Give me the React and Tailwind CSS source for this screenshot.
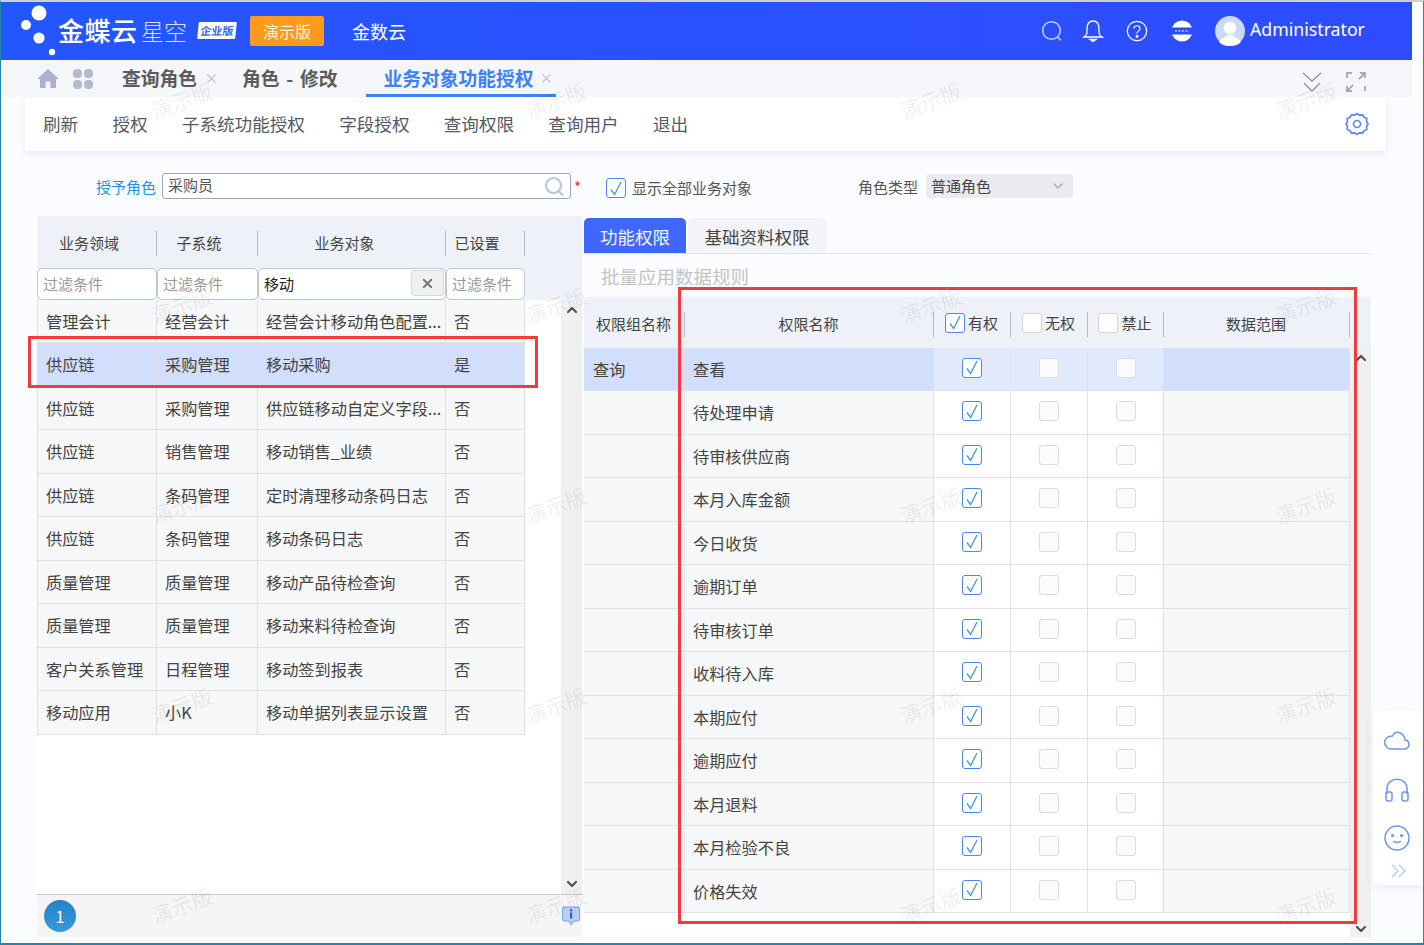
import React from "react";
import { ChevronUp, ChevronDown, X } from "lucide-react";

const FONT = '"Noto Sans CJK SC","Noto Sans",sans-serif';

const leftRows = [
  ["管理会计", "经营会计", "经营会计移动角色配置...", "否"],
  ["供应链", "采购管理", "移动采购", "是"],
  ["供应链", "采购管理", "供应链移动自定义字段...", "否"],
  ["供应链", "销售管理", "移动销售_业绩", "否"],
  ["供应链", "条码管理", "定时清理移动条码日志", "否"],
  ["供应链", "条码管理", "移动条码日志", "否"],
  ["质量管理", "质量管理", "移动产品待检查询", "否"],
  ["质量管理", "质量管理", "移动来料待检查询", "否"],
  ["客户关系管理", "日程管理", "移动签到报表", "否"],
  ["移动应用", "小K", "移动单据列表显示设置", "否"],
];
const rightRows = ["查看", "待处理申请", "待审核供应商", "本月入库金额", "今日收货", "逾期订单", "待审核订单", "收料待入库", "本期应付", "逾期应付", "本月退料", "本月检验不良", "价格失效"];
const toolbar = ["刷新", "授权", "子系统功能授权", "字段授权", "查询权限", "查询用户", "退出"];
const marks = [];
[100, 305, 505, 705, 905].forEach((y) => [183, 557, 932, 1307].forEach((x) => marks.push([x, y])));

function Box({ checked, size = "w-[20px] h-[20px]", light }) {
  return (
    <span className={`${size} inline-flex items-center justify-center rounded-[3px] border ${checked ? "border-[#4c86f0]" : light ? "border-[#dcdcdc]" : "border-[#d4d4d4]"} ${light && !checked ? "bg-[#fbfbfd]" : "bg-white"}`}>
      {checked && (
        <svg width="16" height="17" viewBox="0 0 16 17" fill="none">
          <path d="M3 9.5 L6.6 14.5 L13 2" stroke="#3f97e6" strokeWidth="1.3" />
        </svg>
      )}
    </span>
  );
}

function Sep() {
  return <span className="absolute right-0 top-[15px] h-[25px] w-px bg-[#b4b8c0]" />;
}

function Logo() {
  return (
    <div className="relative h-[58px] w-[248px] shrink-0">
      <svg className="absolute left-0 top-0" width="60" height="58" viewBox="0 0 60 58" fill="white">
        <circle cx="38" cy="11" r="7.5" />
        <circle cx="25" cy="23" r="5" />
        <circle cx="38" cy="36" r="5.6" />
        <circle cx="51" cy="50" r="3.2" />
      </svg>
      <span className="absolute left-[57px] top-[9px] text-[26px] leading-[38px] font-medium text-white tracking-[0.5px]">金蝶云</span>
      <span className="absolute left-[140px] top-[10px] text-[23px] leading-[36px] font-light text-[#d5e0ff]">星空</span>
      <span className="absolute left-[197px] top-[20px] h-[17px] w-[38px] -skew-x-6 bg-white rounded-[1px] text-[11px] leading-[17px] font-bold text-[#3f66e6] text-center">企业版</span>
    </div>
  );
}

export default function App() {
  return (
    <div className="relative w-[1424px] h-[945px] overflow-hidden bg-[#fbfcff] border-t-2 border-t-[#cfcfcf] border-l border-l-[#2484ad] border-r border-r-[#3f7e9e] border-b-2 border-b-[#2484ad] text-[#333]" style={{ fontFamily: FONT }}>
      {/* header */}
      <div className="w-[1411px] h-[58px] flex items-center bg-gradient-to-r from-[#2456ff] to-[#2e4cff] text-white">
        <Logo />
        <div className="ml-[1px] w-[74px] h-[30px] rounded-[2px] bg-[#ff9a1c] text-[16px] leading-[30px] text-center text-[#fff3dd]">演示版</div>
        <div className="ml-[28px] text-[18px] text-white">金数云</div>
        <div className="ml-auto flex items-center">
          <svg width="22" height="22" viewBox="0 0 22 22" fill="none" stroke="#c4d1ff" strokeWidth="1.5"><circle cx="10.5" cy="10.5" r="8.8" /><path d="M16.5 17 L20 20.5" /></svg>
          <svg className="ml-[19px]" width="22" height="24" viewBox="0 0 22 24" fill="none" stroke="white" strokeWidth="1.3"><path d="M11 2 C6.5 2 5 6 5 10 V14 C5 16 3.5 17 2 18 H20 C18.5 17 17 16 17 14 V10 C17 6 15.5 2 11 2Z" /><path d="M8 20.5 H14 L11 22.5Z" fill="white" /></svg>
          <svg className="ml-[22px]" width="22" height="22" viewBox="0 0 22 22" fill="none" stroke="white" strokeWidth="1.2"><circle cx="11" cy="11" r="9.7" /><path d="M8 8.5 C8 4.8 14 4.8 14 8.5 C14 11 11 10.8 11 13.5" /><circle cx="11" cy="16.3" r="0.9" fill="white" /></svg>
          <svg className="ml-[23px]" width="22" height="22" viewBox="0 0 22 22"><circle cx="11" cy="11" r="10.5" fill="white" /><rect x="0" y="7.5" width="22" height="7" fill="#2e4cff" /><path d="M4 11 H18" stroke="#b9c6ff" strokeWidth="1.6" strokeDasharray="2 1.4" /></svg>
          <svg className="ml-[22px]" width="30" height="30" viewBox="0 0 30 30"><circle cx="15" cy="15" r="15" fill="#ccd9f7" /><circle cx="15" cy="12" r="6.2" fill="white" /><path d="M4 26 C7 21 11 22 12 19 H18 C19 22 23 21 26 26 C23 29 19 30 15 30 C11 30 7 29 4 26Z" fill="white" /></svg>
          <span className="ml-[5px] mr-[47px] -mt-[4px] w-[115px] whitespace-nowrap text-[17.7px] leading-[28px] text-white" style={{ fontFamily: '"Noto Sans",sans-serif' }}>Administrator</span>
        </div>
      </div>

      {/* tabs */}
      <div className="w-[1411px] h-[37px] flex items-center bg-[#f5f6fa] relative">
        <svg className="ml-[35px]" width="24" height="21" viewBox="0 0 24 21" fill="#a9b2c8"><path d="M12 1 L23 11 H20 V20 H14.5 V13.5 H9.5 V20 H4 V11 H1Z" /></svg>
        <svg className="ml-[13px]" width="20" height="20" viewBox="0 0 20 20" fill="#b3bacd"><rect x="0" y="0" width="9" height="9" rx="4" /><rect x="11" y="0" width="9" height="9" rx="4" /><rect x="0" y="11" width="9" height="9" rx="4" /><rect x="11" y="11" width="9" height="9" rx="4" /></svg>
        <span className="ml-[29px] text-[18.75px] font-bold text-[#5c5c5c] whitespace-nowrap">查询角色</span>
        <X className="ml-[7px] shrink-0 text-[#bfc3cc]" size={15} strokeWidth={1.8} />
        <span className="ml-[23px] text-[18.75px] font-bold text-[#5c5c5c] whitespace-nowrap [word-spacing:2.5px]">角色 - 修改</span>
        <div className="ml-[29px] h-full w-[190px] flex items-center border-b-[3px] border-b-[#3d80f7] pl-[17px] pt-[2px]">
          <span className="text-[18.75px] font-bold text-[#3d80f7] whitespace-nowrap">业务对象功能授权</span>
          <X className="ml-[6px] shrink-0 text-[#bfc3cc]" size={15} strokeWidth={1.8} />
        </div>
        <svg className="ml-auto mt-[6px]" width="20" height="22" viewBox="0 0 20 22" fill="none" stroke="#8e94a8" strokeWidth="1.4"><path d="M1 2 L10 10 L19 2" /><path d="M2 12 L10 20 L18 12" /></svg>
        <svg className="ml-[24px] mr-[46px] mt-[6px]" width="20" height="20" viewBox="0 0 20 20" fill="none" stroke="#8e94a8" strokeWidth="1.4"><path d="M1 6 V1 H6" /><path d="M14 1 H19 V6" /><path d="M19 14 V19" /><path d="M1 19 L7 13" /><path d="M13 7 L18 2" /><path d="M1 14 V19 H6" /></svg>
      </div>

      {/* toolbar */}
      <div className="ml-[24px] w-[1361px] h-[54px] flex items-center bg-white shadow-[0_3px_6px_rgba(190,200,225,0.3)] text-[17.6px] text-[#555b66] pl-[18px]">
        <div className="flex gap-[34.2px]">
          {toolbar.map((t) => <span key={t}>{t}</span>)}
        </div>
        <svg className="ml-auto mr-[17px]" width="24" height="24" viewBox="0 0 24 24" fill="none" stroke="#5f86f5" strokeWidth="1.7"><path d="M12 1.5 L14.5 3.2 L17.5 2.8 L19 5.3 L21.8 6.5 L21.5 9.5 L23 12 L21.5 14.5 L21.8 17.5 L19 18.7 L17.5 21.2 L14.5 20.8 L12 22.5 L9.5 20.8 L6.5 21.2 L5 18.7 L2.2 17.5 L2.5 14.5 L1 12 L2.5 9.5 L2.2 6.5 L5 5.3 L6.5 2.8 L9.5 3.2Z" strokeLinejoin="round" /><circle cx="12" cy="12" r="3.5" /></svg>
      </div>

      {/* form */}
      <div className="mt-[22px] h-[26px] flex items-center text-[15px]">
        <span className="ml-[95px] text-[#1c92ea] w-[60px] pt-[3px] whitespace-nowrap">授予角色</span>
        <div className="ml-[6px] w-[409px] h-[26px] border border-[#9ca6b6] rounded-[3px] bg-white flex items-center pl-[5px] pr-[5px] text-[#555]">
          <span className="-mt-[2px]">采购员</span>
          <svg className="ml-auto" width="21" height="21" viewBox="0 0 21 21" fill="none" stroke="#b5c6e4" strokeWidth="2.2"><circle cx="9.5" cy="9.5" r="7.5" /><path d="M15 15.5 L19 19.5" /></svg>
        </div>
        <span className="ml-[3px] mt-[2px] text-[#f03030]">*</span>
        <span className="ml-[25px] mt-[4px] flex items-center">
          <Box checked />
          <span className="ml-[6px] text-[#555]">显示全部业务对象</span>
        </span>
        <span className="ml-[106px] mt-[3px] text-[#555] whitespace-nowrap">角色类型</span>
        <div className="ml-[8px] w-[147px] h-[24px] rounded-[4px] bg-[#e9ebef] flex items-center pl-[5px] pr-[7px] text-[#444]">
          <span>普通角色</span>
          <ChevronDown className="ml-auto text-[#aaaeb6]" size={16} strokeWidth={2.4} />
        </div>
      </div>

      {/* main */}
      <div className="mt-[17px] flex items-start">
        {/* left panel */}
        <div className="ml-[36px] w-[545px] h-[721px] flex flex-col">
          <div className="h-[84px] bg-[#eef1f8]">
            <div className="grid grid-cols-[120px_101px_188px_79px] w-[488px] h-[52px] text-[15px] text-[#444] text-center leading-[53px] relative">
              <div className="relative pr-[16px]">业务领域<Sep /></div>
              <div className="relative pr-[17px]">子系统<Sep /></div>
              <div className="relative pr-[15px]">业务对象<Sep /></div>
              <div className="relative pr-[17px]">已设置<Sep /></div>
            </div>
            <div className="grid grid-cols-[120px_101px_188px_79px] w-[488px] h-[32px] text-[15px]">
              {["", "", "移动", ""].map((v, i) => (
                <div key={i} className="relative h-[32px] rounded-[5px] border border-[#b9cbd8] bg-white pl-[5px] leading-[30px] overflow-hidden">
                  {v ? <span className="text-[#222]">{v}</span> : <span className="text-[#9a9a9a]">过滤条件</span>}
                  {v && (
                    <span className="absolute right-[1px] top-[1px] w-[33px] h-[26px] rounded-[3px] border border-[#d6d6d6] bg-[#f0f0f0] flex items-center justify-center">
                      <X size={15} strokeWidth={3} className="text-[#777]" />
                    </span>
                  )}
                </div>
              ))}
            </div>
          </div>
          <div className="h-[594px] flex bg-white">
            <div className="w-[488px] text-[16.2px]">
              {leftRows.map((r, i) => (
                <div key={i} className={`grid grid-cols-[119px_101px_188px_78px] ${i % 2 ? "h-[44px]" : "h-[43px]"} leading-[42px] border-b border-l border-r border-[#dfe1e5] ${i === 1 ? "bg-[#d2dffc]" : "bg-[#f6f7f9]"} text-[#444]`}>
                  {r.map((c, j) => (
                    <div key={j} className={`whitespace-nowrap overflow-hidden pl-[8px] ${j < 3 ? "border-r border-r-[#dfe1e5]" : ""}`}>{c}</div>
                  ))}
                </div>
              ))}
            </div>
            <div className="ml-[36px] w-[21px] bg-[#f0f0f0] flex flex-col items-center justify-between">
              <ChevronUp size={16} strokeWidth={3.2} className="mt-[2px] text-[#505050]" />
              <ChevronDown size={16} strokeWidth={3.2} className="mb-[2px] text-[#505050]" />
            </div>
          </div>
          <div className="h-[43px] bg-[#f5f5f5] border-t border-t-[#c9c9c9] flex items-center relative">
            <span className="ml-[7px] w-[32px] h-[32px] rounded-full bg-gradient-to-b from-[#1f82cb] to-[#3a9ad6] text-white text-[16px] flex items-center justify-center">1</span>
            <svg className="ml-auto mr-[2px]" width="18" height="20" viewBox="0 0 18 20"><path d="M2 1 H16 Q17.5 1 17.5 3 V13 Q17.5 15 16 15 H12 L9 19 L7 15 H2 Q0.5 15 0.5 13 V3 Q0.5 1 2 1Z" fill="#b7cdf3" stroke="#7d9fdc" /><rect x="8" y="3.2" width="2.2" height="2.2" fill="#2a62c4" /><rect x="8" y="6.5" width="2.2" height="6" fill="#2a62c4" /></svg>
          </div>
        </div>

        {/* right panel */}
        <div className="ml-[2px] mt-[2px] w-[787px] flex flex-col">
          <div className="h-[36px] flex items-stretch border-b border-b-[#e3e5ea] text-[17.5px]">
            <div className="w-[102px] rounded-t-[5px] bg-[#3f66ff] text-[#f3f6ff] text-center leading-[38px]">功能权限</div>
            <div className="ml-[2px] w-[138px] rounded-t-[5px] bg-[#f2f4f9] text-[#444] text-center leading-[38px]">基础资料权限</div>
          </div>
          <div className="h-[43px] pl-[17px] text-[18.5px] leading-[44px] text-[#c4c4c4] whitespace-nowrap">批量应用数据规则</div>
          <div className="h-[51px] bg-[#eef1f8] text-[15px] text-[#444] leading-[54px] text-center">
            <div className="grid grid-cols-[101px_249px_77px_77px_76px_186px] w-[766px]">
              <div className="relative pr-[2px]">权限组名称<Sep /></div>
              <div className="relative pr-[2px]">权限名称<Sep /></div>
              <div className="relative flex items-center justify-center gap-[3px] h-[51px] pr-[2px]"><Box checked /><span>有权</span><Sep /></div>
              <div className="relative flex items-center justify-center gap-[3px] h-[51px] pr-[2px]"><Box /><span>无权</span><Sep /></div>
              <div className="relative flex items-center justify-center gap-[3px] h-[51px] pr-[2px]"><Box /><span>禁止</span><Sep /></div>
              <div className="relative pr-[2px]">数据范围<Sep /></div>
            </div>
          </div>
          <div className="h-[589px] flex bg-white">
            <div className="w-[766px] text-[16.2px] text-[#444]">
              {rightRows.map((n, i) => (
                <div key={n} className={`grid grid-cols-[101px_249px_77px_77px_76px_186px] ${i % 2 ? "h-[44px]" : "h-[43px]"} leading-[42px] border-b border-b-[#dfe1e5] ${i === 0 ? "bg-[#d2dffc]" : ""}`}>
                  <div className={`pl-[9px] border-r border-r-[#dfe1e5] ${i === 0 ? "" : "bg-[#f6f7f9]"}`}>{i === 0 ? "查询" : ""}</div>
                  <div className={`pl-[8px] border-r border-r-[#dfe1e5] ${i === 0 ? "" : "bg-[#f6f7f9]"}`}>{n}</div>
                  {[true, false, false].map((c, j) => (
                    <div key={j} className={`flex items-center justify-center border-r border-r-[#dfe1e5] pb-[3px] ${i === 0 ? "bg-[#e1e9fc]" : "bg-white"}`}>
                      <Box checked={c} light size="w-[20px] h-[20px]" />
                    </div>
                  ))}
                  <div className={`border-r border-r-[#dfe1e5] ${i === 0 ? "" : "bg-[#f6f7f9]"}`} />
                </div>
              ))}
            </div>
            <div className="w-[21px] bg-[#f0f0f0] flex flex-col items-center justify-between">
              <ChevronUp size={16} strokeWidth={3.2} className="mt-[2px] text-[#505050]" />
              <ChevronDown size={16} strokeWidth={3.2} className="text-[#505050]" />
            </div>
          </div>
        </div>
      </div>

      {/* side rail */}
      <div className="absolute left-[1372px] top-[709px] w-[51px] h-[174px] rounded-l-[6px] bg-white shadow-[0_3px_10px_rgba(190,200,225,0.35)] flex flex-col items-center pt-[19px]">
        <svg className="mr-[3px] shrink-0" width="26" height="20" viewBox="0 0 26 20" fill="none" stroke="#6f95f5" strokeWidth="1.5"><path d="M7 19 H20 C26 19 27 11 21 10 C20 3 12 -1 8.5 6 C3 6 -2 11 2 16 C3 18 5 19 7 19Z" /></svg>
        <svg className="mt-[28px] mr-[3px] shrink-0" width="24" height="24" viewBox="0 0 24 24" fill="none" stroke="#6f95f5" strokeWidth="1.5"><path d="M2 16 V11 C2 -2 22 -2 22 11 V16" /><rect x="1" y="14" width="6" height="9" rx="2" /><rect x="17" y="14" width="6" height="9" rx="2" /></svg>
        <svg className="mt-[23px] mr-[3px] shrink-0" width="26" height="26" viewBox="0 0 26 26" fill="none" stroke="#6f95f5" strokeWidth="1.5"><circle cx="13" cy="13" r="12" /><circle cx="8.5" cy="10.5" r="0.8" fill="#6f95f5" /><circle cx="17.5" cy="10.5" r="0.8" fill="#6f95f5" /><path d="M9 16 C11 18 15 18 17 16" /></svg>
        <svg className="mt-[13px] shrink-0" width="16" height="14" viewBox="0 0 16 14" fill="none" stroke="#b4c9fa" strokeWidth="1.4"><path d="M1 1 L7 7 L1 13" /><path d="M8 1 L14 7 L8 13" /></svg>
      </div>

      {/* red annotation frames */}
      <div className="absolute left-[27px] top-[334px] w-[510px] h-[52px] border-[3px] border-[#f53a3a]" />
      <div className="absolute left-[677px] top-[285px] w-[679px] h-[637px] border-[3px] border-[#f53a3a]" />

      {/* watermarks */}
      {marks.map(([x, y]) => (
        <span key={`${x}-${y}`} className="absolute -rotate-[20deg] text-[21px] leading-[24px] text-black/[.075] whitespace-nowrap pointer-events-none" style={{ left: x - 34, top: y - 14 }}>演示版</span>
      ))}
    </div>
  );
}
